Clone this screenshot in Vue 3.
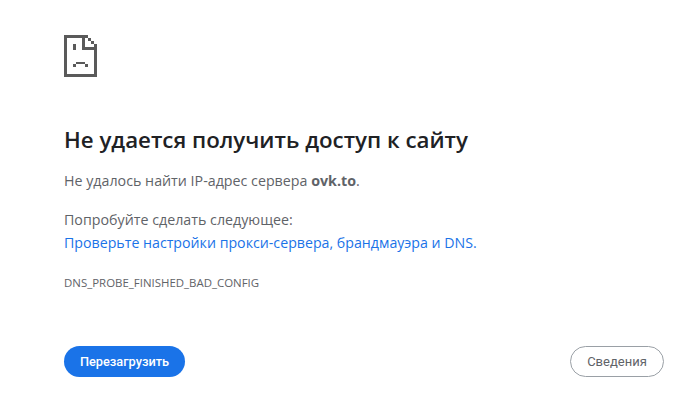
<template>
  <div class="error-page">
    <div class="content">
      <svg class="sad-icon" width="33" height="42" viewBox="0 0 33 42" shape-rendering="crispEdges">
        <path fill="#5a5a5a" d="M0 0H18V3H3V39H30V15H33V42H0Z" />
        <path fill="#5a5a5a" fill-rule="evenodd" d="M18 0H24V3H27V6H30V9H33V15H18ZM21 3V12H30V9H27V6H24V3Z" />
        <path fill="#5a5a5a" d="M9 9H12V15H9ZM12 27H21V29H24V32H21V29H12V32H9V29H12Z" />
      </svg>
      <h1 class="title">Не удается получить доступ к сайту</h1>
      <p class="summary">Не удалось найти IP-адрес сервера <b>ovk.to</b>.</p>
      <p class="try-label">Попробуйте сделать следующее:</p>
      <a class="link" href="#">Проверьте настройки прокси-сервера, брандмауэра и DNS.</a>
      <div class="code">DNS_PROBE_FINISHED_BAD_CONFIG</div>
    </div>
    <div class="buttons">
      <button class="btn primary">Перезагрузить</button>
      <button class="btn secondary">Сведения</button>
    </div>
  </div>
</template>

<script setup>
</script>

<style>
html, body {
  margin: 0;
  background: #fff;
}
</style>

<style scoped>
.error-page {
  width: 694px;
  height: 401px;
  box-sizing: border-box;
  padding: 35px 30px 24px 64px;
  display: flex;
  flex-direction: column;
  justify-content: space-between;
  font-family: "Open Sans", "Noto Sans", sans-serif;
  color: #5f6368;
}
.sad-icon {
  display: block;
}
.title {
  margin: 47px 0 0;
  font-size: 22.3px;
  line-height: 32px;
  font-weight: 600;
  color: #202124;
}
.summary {
  margin: 15px 0 0;
  font-size: 14.25px;
  line-height: 20px;
}
.summary b {
  font-weight: 700;
}
.try-label {
  margin: 19px 0 0;
  font-size: 14.25px;
  line-height: 20px;
}
.link {
  display: block;
  margin-top: 3px;
  font-size: 14.2px;
  line-height: 20px;
  color: #1a73e8;
  text-decoration: none;
}
.code {
  margin-top: 22px;
  font-size: 11.45px;
  line-height: 16px;
}
.buttons {
  display: flex;
  justify-content: space-between;
  align-items: center;
}
.btn {
  box-sizing: border-box;
  font-family: Roboto, sans-serif;
  font-size: 12.75px;
  border-radius: 16px;
  height: 31px;
  cursor: pointer;
}
.primary {
  width: 121px;
  background: #1a73e8;
  border: none;
  color: #fff;
  font-weight: 500;
}
.secondary {
  width: 94px;
  background: #fff;
  border: 1px solid #9aa0a6;
  color: #5f6368;
  font-size: 13px;
}
</style>
